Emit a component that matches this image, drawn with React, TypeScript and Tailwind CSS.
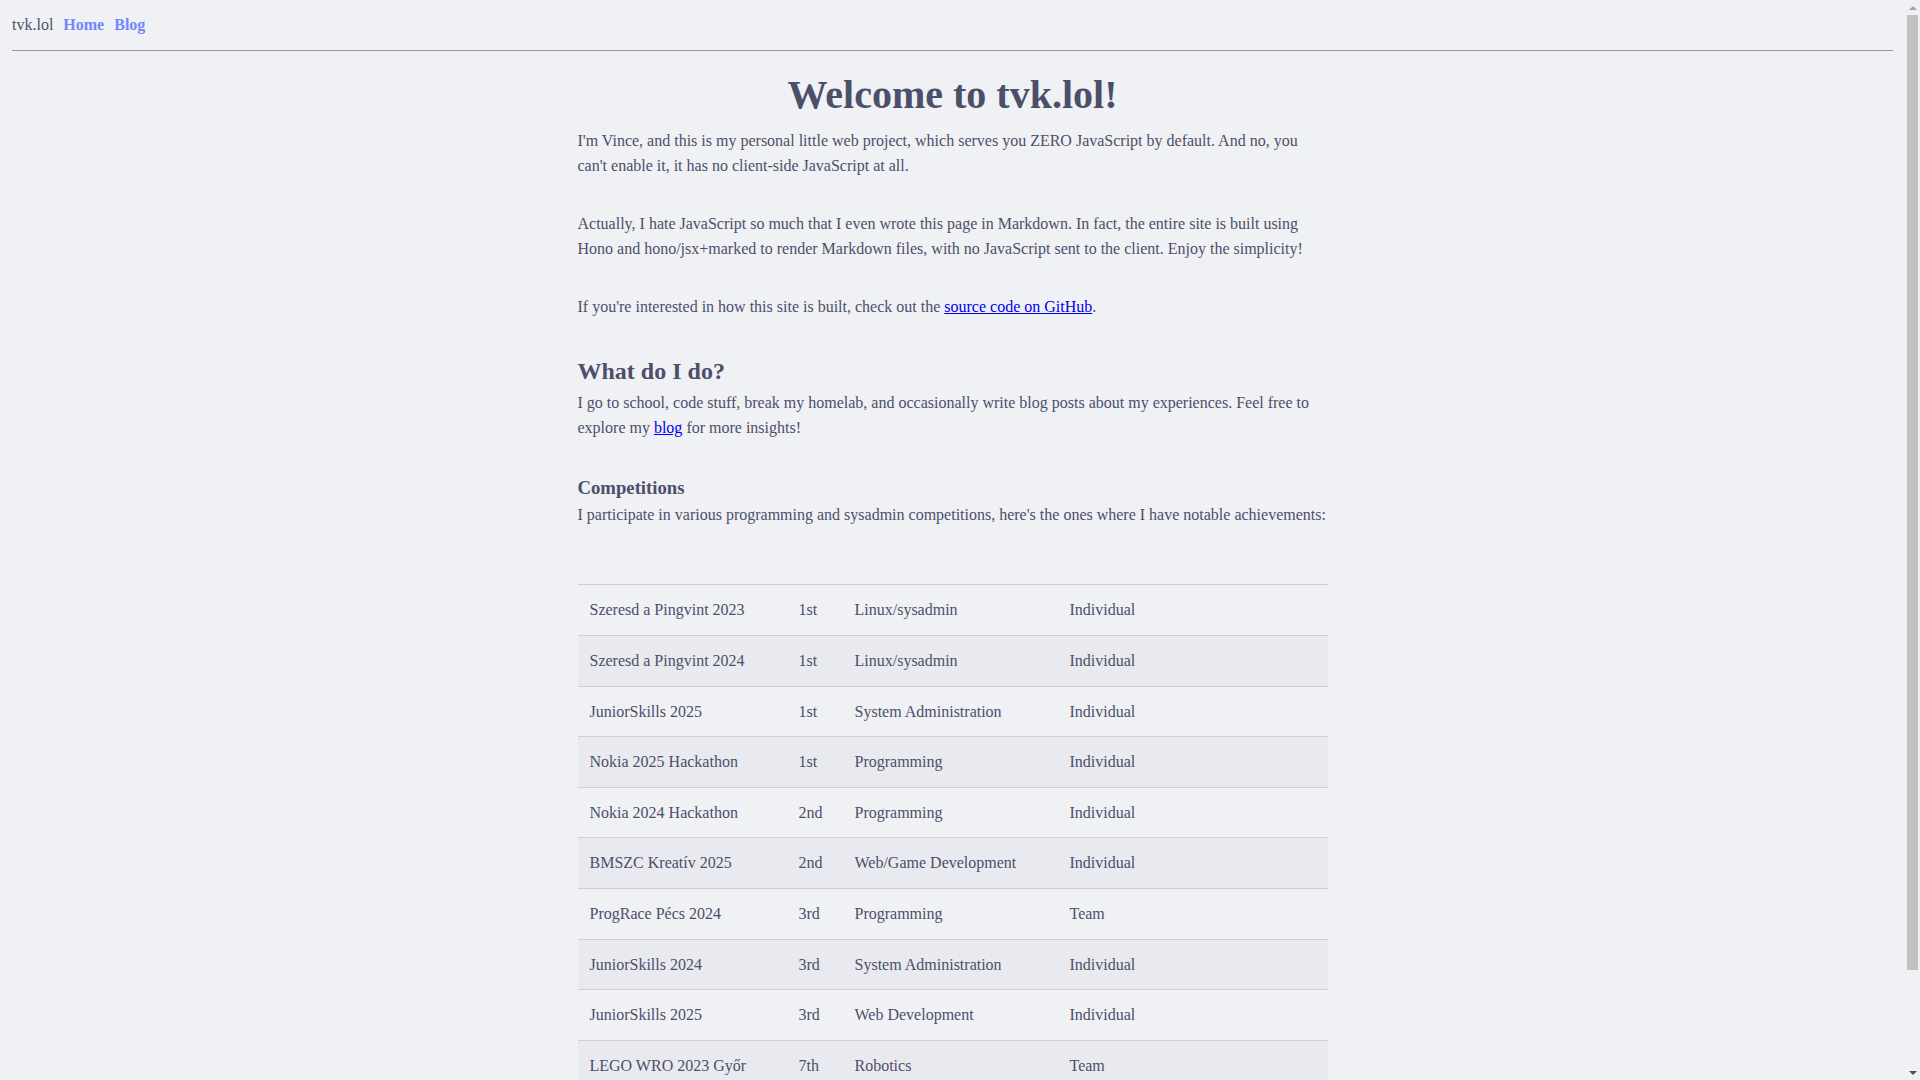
const rows = [
  ["Szeresd a Pingvint 2023", "1st", "Linux/sysadmin", "Individual"],
  ["Szeresd a Pingvint 2024", "1st", "Linux/sysadmin", "Individual"],
  ["JuniorSkills 2025", "1st", "System Administration", "Individual"],
  ["Nokia 2025 Hackathon", "1st", "Programming", "Individual"],
  ["Nokia 2024 Hackathon", "2nd", "Programming", "Individual"],
  ["BMSZC Kreatív 2025", "2nd", "Web/Game Development", "Individual"],
  ["ProgRace Pécs 2024", "3rd", "Programming", "Team"],
  ["JuniorSkills 2024", "3rd", "System Administration", "Individual"],
  ["JuniorSkills 2025", "3rd", "Web Development", "Individual"],
  ["LEGO WRO 2023 Győr", "7th", "Robotics", "Team"],
];

function Scrollbar() {
  return (
    <div className="w-[15px] h-screen flex flex-col items-center bg-[#eff1f5]">
      <div className="h-[15px] flex items-center justify-center">
        <div className="w-0 h-0 border-l-[4px] border-r-[4px] border-b-[4px] border-l-transparent border-r-transparent border-b-[#a3a3a3]" />
      </div>
      <div className="w-[11px] h-[955px] bg-[#c1c1c1]" />
      <div className="flex-1" />
      <div className="h-[15px] flex items-center justify-center">
        <div className="w-0 h-0 border-l-[4px] border-r-[4px] border-t-[4px] border-l-transparent border-r-transparent border-t-[#505050]" />
      </div>
    </div>
  );
}

export default function App() {
  return (
    <div className="h-screen flex overflow-hidden bg-[#eff1f5] text-[#4c4f69] text-[16px] leading-[25.6px] font-['Liberation_Serif',serif]">
      <div className="flex-1 overflow-hidden">
        <header className="mx-3 pt-3 pb-3 border-b border-[#9a9a9a] flex gap-[10px]">
          <span>tvk.lol</span>
          <a href="#" className="font-bold text-[#7287fd]">Home</a>
          <a href="#" className="font-bold text-[#7287fd]">Blog</a>
        </header>

        <main className="w-[750px] mx-auto pb-[100px]">
          <h1 className="mt-5 text-center text-[40px] leading-[48px] font-bold">Welcome to tvk.lol!</h1>

          <p className="mt-[9px]">
            I'm Vince, and this is my personal little web project, which serves you ZERO JavaScript by default. And no, you
            can't enable it, it has no client-side JavaScript at all.
          </p>
          <p className="mt-8">
            Actually, I hate JavaScript so much that I even wrote this page in Markdown. In fact, the entire site is built using
            Hono and hono/jsx+marked to render Markdown files, with no JavaScript sent to the client. Enjoy the simplicity!
          </p>
          <p className="mt-8">
            If you're interested in how this site is built, check out the{" "}
            <a href="#" className="text-[#0000ee] underline">source code on GitHub</a>.
          </p>

          <h2 className="mt-[36px] text-[24px] leading-[30px] font-bold">What do I do?</h2>
          <p className="mt-[4px]">
            I go to school, code stuff, break my homelab, and occasionally write blog posts about my experiences. Feel free to
            explore my <a href="#" className="text-[#0000ee] underline">blog</a> for more insights!
          </p>

          <h3 className="mt-[35px] text-[18.72px] leading-[24px] font-bold">Competitions</h3>
          <p className="mt-[2px]">
            I participate in various programming and sysadmin competitions, here's the ones where I have notable achievements:
          </p>

          <table className="mt-[57px] w-full table-fixed border-collapse">
            <colgroup>
              <col className="w-[209px]" />
              <col className="w-[56px]" />
              <col className="w-[215px]" />
              <col />
            </colgroup>
            <tbody>
              {rows.map((r, i) => (
                <tr key={i} className={"border-t border-[#ccd0da] " + (i % 2 === 1 ? "bg-[#e8eaef]" : "")}>
                  {r.map((c, j) => (
                    <td key={j} className="px-3 py-3 text-left font-normal">{c}</td>
                  ))}
                </tr>
              ))}
            </tbody>
          </table>
        </main>
      </div>
      <Scrollbar />
    </div>
  );
}
